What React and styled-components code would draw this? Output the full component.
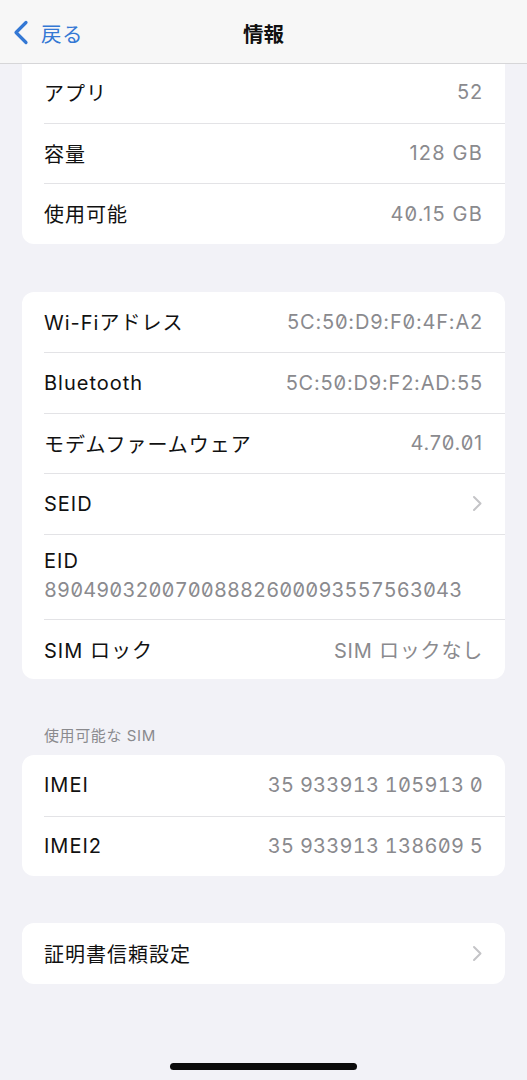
import React from 'react'
import styled, { createGlobalStyle } from 'styled-components'

const GlobalStyle = createGlobalStyle`
  html, body {
    margin: 0;
    padding: 0;
    background: #f2f2f7;
    font-family: Inter, "Noto Sans CJK JP", sans-serif;
    -webkit-font-smoothing: antialiased;
  }
`

const Screen = styled.div`
  width: 527px;
  height: 1080px;
  background: #f2f2f7;
  display: flex;
  flex-direction: column;
  overflow: hidden;
`

const NavBar = styled.header`
  height: 63px;
  flex-shrink: 0;
  background: #f7f7f7;
  border-bottom: 1px solid #d6d6d8;
  display: grid;
  grid-template-columns: 1fr auto 1fr;
  align-items: center;
  position: relative;
  z-index: 2;
`

const BackButton = styled.button`
  justify-self: start;
  display: flex;
  align-items: center;
  gap: 12px;
  padding: 0 0 0 12px;
  border: 0;
  background: none;
  color: #3478d4;
  font-family: inherit;
  font-size: 20.5px;
  letter-spacing: 0.5px;
  margin-top: 2px;
`

const Title = styled.h1`
  margin: 0;
  font-size: 20.5px;
  font-weight: 700;
  color: #111;
  margin-top: 2px;
`

const Content = styled.main`
  display: flex;
  flex-direction: column;
  padding: 0 22px;
  margin-top: -2px;
`

const Card = styled.section`
  background: #fff;
  border-radius: ${p => (p.$clipped ? '0 0 12px 12px' : '12px')};
  margin-top: ${p => p.$top || 0}px;
  overflow: hidden;
`

const Row = styled.div`
  min-height: 60.5px;
  padding-left: 22px;
  display: flex;
  align-items: center;
  & + & > div {
    border-top: 1px solid #e3e3e6;
  }
`

const RowInner = styled.div`
  flex: 1;
  align-self: stretch;
  display: flex;
  padding-right: 22px;
  flex-direction: ${p => (p.$stack ? 'column' : 'row')};
  align-items: ${p => (p.$stack ? 'flex-start' : 'center')};
  justify-content: ${p => (p.$stack ? 'center' : 'space-between')};
  padding-top: ${p => (p.$stack ? '14px' : 0)};
  padding-bottom: ${p => (p.$stack ? '17px' : 0)};
  gap: ${p => (p.$stack ? '5px' : 0)};
`

const Label = styled.span`
  font-size: 20px;
  color: #111;
  letter-spacing: 1px;
`

const Value = styled.span`
  font-size: 20px;
  color: #8a8a8e;
  font-feature-settings: ${p => (p.$mono ? "'tnum' 1, 'zero' 1" : "'zero' 1")};
  letter-spacing: ${p => p.$spacing ?? 0.8}px;
`

const Chevron = styled.svg`
  width: 10px;
  height: 17px;
  margin-right: 1px;
`

const SectionHeader = styled.div`
  margin-top: 45px;
  padding: 0 22px 10px;
  font-size: 15px;
  letter-spacing: 0.6px;
  color: #8a8a8e;
`

const HomeIndicator = styled.div`
  margin: auto auto 10px;
  width: 187px;
  height: 7px;
  border-radius: 4px;
  background: #0b0b0b;
`

const ChevronRight = () => (
  <Chevron viewBox="0 0 10 17" fill="none">
    <path d="M2 2l6.5 6.5L2 15" stroke="#c4c4c7" strokeWidth="2" strokeLinecap="round" strokeLinejoin="round" />
  </Chevron>
)

const Item = ({ label, value, chevron, mono, spacing }) => (
  <Row>
    <RowInner>
      <Label>{label}</Label>
      {chevron ? (
        <ChevronRight />
      ) : (
        <Value $mono={mono} $spacing={spacing}>{value}</Value>
      )}
    </RowInner>
  </Row>
)

const App = () => (
  <Screen>
    <GlobalStyle />
    <NavBar>
      <BackButton>
        <svg width="17" height="25" viewBox="0 0 17 25" fill="none">
          <path d="M14 2.5L4 12.5l10 10" stroke="#3478d4" strokeWidth="3.2" strokeLinecap="round" strokeLinejoin="round" />
        </svg>
        戻る
      </BackButton>
      <Title>情報</Title>
      <div />
    </NavBar>
    <Content>
      <Card $clipped>
        <Item label="アプリ" value="52" />
        <Item label="容量" value="128 GB" spacing={1.2} />
        <Item label="使用可能" value="40.15 GB" spacing={1.2} />
      </Card>

      <Card $top={48}>
        <Item label="Wi-Fiアドレス" value="5C:50:D9:F0:4F:A2" />
        <Item label="Bluetooth" value="5C:50:D9:F2:AD:55" />
        <Item label="モデムファームウェア" value="4.70.01" />
        <Item label="SEID" chevron />
        <Row>
          <RowInner $stack>
            <Label>EID</Label>
            <Value $mono $spacing={0.1}>89049032007008882600093557563043</Value>
          </RowInner>
        </Row>
        <Item label="SIM ロック" value="SIM ロックなし" />
      </Card>

      <SectionHeader>使用可能な SIM</SectionHeader>
      <Card>
        <Item label="IMEI" value="35 933913 105913 0" mono spacing={0.25} />
        <Item label="IMEI2" value="35 933913 138609 5" mono spacing={0.25} />
      </Card>

      <Card $top={47}>
        <Item label="証明書信頼設定" chevron />
      </Card>
    </Content>
    <HomeIndicator />
  </Screen>
)

export default App
